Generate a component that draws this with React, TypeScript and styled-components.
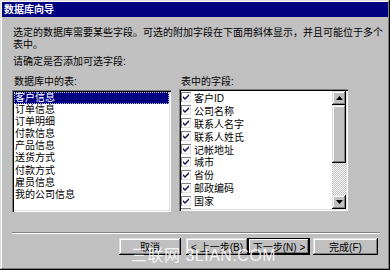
import styled, { createGlobalStyle } from 'styled-components';

const GlobalStyle = createGlobalStyle`
  html, body {
    margin: 0;
    padding: 0;
    background: #c0c0c0;
  }
  body {
    font-family: "Liberation Sans", "Noto Sans CJK SC", sans-serif;
    color: #000;
  }
`;

const tables = ['客户信息', '订单信息', '订单明细', '付款信息', '产品信息', '送货方式', '付款方式', '雇员信息', '我的公司信息'];
const fields = ['客户ID', '公司名称', '联系人名字', '联系人姓氏', '记帐地址', '城市', '省份', '邮政编码', '国家', '联系人职务'];

function Check() {
  return (
    <CheckBox>
      <svg width="8" height="8" viewBox="0 0 8 8">
        <path d="M1 3 L3 5 L7 1 L7 3 L3 7 L1 5 Z" fill="#101050" />
      </svg>
    </CheckBox>
  );
}

function Arrow({ down }: { down?: boolean }) {
  return (
    <svg width="7" height="4" viewBox="0 0 7 4">
      {down ? <path d="M0 0 H7 L3.5 4 Z" fill="#000" /> : <path d="M0 4 H7 L3.5 0 Z" fill="#000" />}
    </svg>
  );
}

export default function App() {
  return (
    <>
      <GlobalStyle />
      <Window>
        <TitleBar>数据库向导</TitleBar>
        <Content>
          <Intro>
            <IntroLine>选定的数据库需要某些字段。可选的附加字段在下面用斜体显示，并且可能位于多个</IntroLine>
            <IntroLine>表中。</IntroLine>
          </Intro>
          <Prompt>请确定是否添加可选字段:</Prompt>
          <Columns>
            <Column>
              <Label>数据库中的表:</Label>
              <ListBox>
                {tables.map((t, i) => (
                  <TableItem key={t} $selected={i === 0}>
                    {t}
                  </TableItem>
                ))}
              </ListBox>
            </Column>
            <Column>
              <Label>表中的字段:</Label>
              <ListBox $top={-1}>
                <FieldList>
                  {fields.map(f => (
                    <FieldItem key={f}>
                      <Check />
                      <span>{f}</span>
                    </FieldItem>
                  ))}
                </FieldList>
                <ScrollBar>
                  <ScrollButton>
                    <Arrow />
                  </ScrollButton>
                  <Thumb />
                  <Track />
                  <ScrollButton>
                    <Arrow down />
                  </ScrollButton>
                </ScrollBar>
              </ListBox>
            </Column>
          </Columns>
          <Separator />
          <ButtonRow>
            <Button>取消</Button>
            <Button $gap={5}>&lt; 上一步(B)</Button>
            <Button $default>下一步(N) &gt;</Button>
            <Button $gap={3} $width={65}>完成(F)</Button>
          </ButtonRow>
        </Content>
        <Watermark>三联网 3LIAN.COM</Watermark>
      </Window>
    </>
  );
}

const Window = styled.div`
  position: relative;
  width: 390px;
  height: 270px;
  box-sizing: border-box;
  padding: 2px;
  background: #c0c0c0;
  box-shadow: inset -1px -1px #000, inset 1px 1px #dfdfdf, inset -2px -2px #808080, inset 2px 2px #fff;
  overflow: hidden;
`;

const TitleBar = styled.div`
  height: 15px;
  line-height: 15px;
  padding-left: 2px;
  background: #000080;
  color: #fff;
  font-size: 10px;
  font-weight: bold;
`;

const Content = styled.div`
  padding: 10px 8px 0 11px;
  font-size: 10px;
`;

const Intro = styled.div`
  line-height: 11.5px;
`;

const IntroLine = styled.div`
  white-space: nowrap;
`;

const Prompt = styled.div`
  line-height: 12px;
  margin-top: 6px;
`;

const Columns = styled.div`
  display: grid;
  grid-template-columns: 159px 169px;
  column-gap: 8px;
  margin-top: 8px;
  margin-left: -1px;
`;

const Column = styled.div`
  display: flex;
  flex-direction: column;
`;

const Label = styled.div`
  line-height: 12px;
  padding-left: 2px;
  margin-bottom: 2px;
`;

const ListBox = styled.div<{ $top?: number }>`
  position: relative;
  top: ${p => p.$top ?? 0}px;
  display: flex;
  flex-direction: ${p => (p.$top !== undefined ? 'row' : 'column')};
  height: 122px;
  box-sizing: border-box;
  padding: 2px;
  background: #fff;
  box-shadow: inset 1px 1px #808080, inset 2px 2px #000, inset -1px -1px #fff, inset -2px -2px #dfdfdf;
  overflow: hidden;
`;

const TableItem = styled.div<{ $selected?: boolean }>`
  height: 12.1px;
  line-height: 12px;
  padding-left: 1px;
  white-space: nowrap;
  background: ${p => (p.$selected ? '#000080' : 'transparent')};
  color: ${p => (p.$selected ? '#fff' : '#000')};
  outline: ${p => (p.$selected ? '1px dotted #c0c0c0' : 'none')};
  outline-offset: -1px;
`;

const FieldList = styled.div`
  flex: 1;
  overflow: hidden;
`;

const FieldItem = styled.div`
  display: flex;
  align-items: center;
  gap: 3px;
  height: 12.9px;
  white-space: nowrap;
`;

const CheckBox = styled.span`
  display: flex;
  align-items: center;
  justify-content: center;
  width: 10px;
  height: 10px;
  box-sizing: border-box;
  background: #fff;
  box-shadow: inset 1px 1px #808080, inset -1px -1px #dfdfdf;
  flex-shrink: 0;
`;

const ScrollBar = styled.div`
  display: flex;
  flex-direction: column;
  width: 14px;
  flex-shrink: 0;
`;

const raised = `
  background: #c0c0c0;
  box-shadow: inset -1px -1px #000, inset 1px 1px #dfdfdf, inset -2px -2px #808080, inset 2px 2px #fff;
`;

const ScrollButton = styled.div`
  display: flex;
  align-items: center;
  justify-content: center;
  height: 14px;
  ${raised}
`;

const Thumb = styled.div`
  height: 58px;
  ${raised}
`;

const Track = styled.div`
  flex: 1;
  background: repeating-conic-gradient(#fff 0 25%, #c0c0c0 0 50%) 0 0 / 2px 2px;
`;

const Separator = styled.div`
  height: 0;
  margin: 20px 0 0 -1px;
  border-top: 1px solid #808080;
  border-bottom: 1px solid #fff;
`;

const ButtonRow = styled.div`
  display: flex;
  justify-content: flex-end;
  margin-top: 4px;
  padding-right: 2px;
`;

const Button = styled.div<{ $gap?: number; $width?: number; $default?: boolean }>`
  display: flex;
  align-items: center;
  justify-content: center;
  width: ${p => p.$width ?? 62}px;
  height: 17px;
  box-sizing: border-box;
  margin-left: ${p => p.$gap ?? 0}px;
  white-space: nowrap;
  ${raised}
  ${p =>
    p.$default &&
    `box-shadow: inset 0 0 0 1px #000, inset -2px -2px #000, inset 2px 2px #fff, inset -3px -3px #808080;`}
`;

const Watermark = styled.div`
  position: absolute;
  left: 131px;
  top: 246px;
  font-size: 16px;
  line-height: 20px;
  color: rgba(255, 255, 255, 0.85);
  letter-spacing: 0.5px;
  pointer-events: none;
  white-space: nowrap;
`;
